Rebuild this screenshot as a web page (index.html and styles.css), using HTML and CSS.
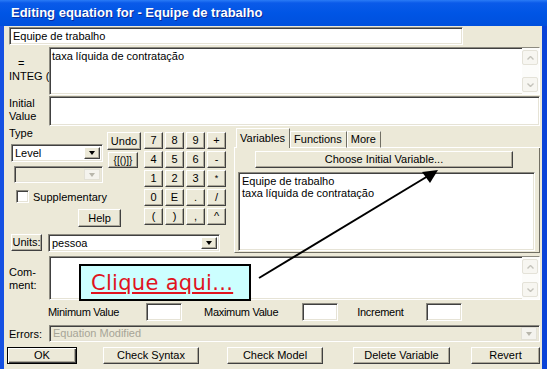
FILE: index.html
```html
<!doctype html>
<html lang="en">
<head>
    <meta charset="utf-8">
    <title>Editing equation for - Equipe de trabalho</title>
    <link rel="stylesheet" href="styles.css">
</head>
<body>
<div class="window">
    <div class="titlebar">Editing equation for - Equipe de trabalho</div>
    <div class="client">
        <div class="field name-field">Equipe de trabalho</div>

        <div class="row eq-row">
            <div class="side-label eq-label"><span class="eq-sign">=</span><span>INTEG (</span></div>
            <div class="field textbox">
                <div class="text">taxa líquida de contratação</div>
                <div class="vscroll">
                    <span class="sbtn"><svg width="7" height="4"><path d="M0.5 3.5 L3.5 0.5 L6.5 3.5" fill="none" stroke="#c4c3bb" stroke-width="1.4"/></svg></span>
                    <span class="sbtn"><svg width="7" height="4"><path d="M0.5 0.5 L3.5 3.5 L6.5 0.5" fill="none" stroke="#c4c3bb" stroke-width="1.4"/></svg></span>
                </div>
            </div>
        </div>

        <div class="row init-row">
            <div class="side-label">Initial<br>Value</div>
            <div class="field textbox"></div>
        </div>

        <div class="row middle">
            <div class="left-part">
                <div class="top-block">
                    <div class="type-col">
                        <div class="type-label">Type</div>
                        <div class="field select level-select">
                            <span class="value">Level</span>
                            <span class="arrow"><i class="tri"></i></span>
                        </div>
                        <div class="field select disabled sub-select">
                            <span class="value"></span>
                            <span class="arrow light"><i class="tri grey"></i></span>
                        </div>
                        <div class="check-row">
                            <span class="field checkbox"></span>
                            <span>Supplementary</span>
                        </div>
                        <div class="btn help-btn">Help</div>
                    </div>
                    <div class="ops-col">
                        <div class="btn undo-btn">Undo</div>
                        <div class="btn brackets-btn">{[()]}</div>
                    </div>
                    <div class="keypad">
                        <div class="btn">7</div><div class="btn">8</div><div class="btn">9</div><div class="btn">+</div>
                        <div class="btn">4</div><div class="btn">5</div><div class="btn">6</div><div class="btn">-</div>
                        <div class="btn">1</div><div class="btn">2</div><div class="btn">3</div><div class="btn small">*</div>
                        <div class="btn">0</div><div class="btn">E</div><div class="btn">.</div><div class="btn">/</div>
                        <div class="btn">(</div><div class="btn">)</div><div class="btn">,</div><div class="btn">^</div>
                    </div>
                </div>
                <div class="units-row">
                    <div class="btn units-btn">Units:</div>
                    <div class="field select units-select">
                        <span class="value">pessoa</span>
                        <span class="arrow"><i class="tri"></i></span>
                    </div>
                </div>
            </div>

            <div class="tabs-part">
                <div class="tab-strip">
                    <span class="tab-lead"></span>
                    <span class="tab active">Variables</span>
                    <span class="tab">Functions</span>
                    <span class="tab">More</span>
                    <span class="tab-fill"></span>
                </div>
                <div class="tab-panel">
                    <div class="btn choose-btn">Choose Initial Variable...</div>
                    <div class="field var-list">
                        <div>Equipe de trabalho</div>
                        <div>taxa líquida de contratação</div>
                    </div>
                </div>
            </div>
        </div>

        <div class="row comment-row">
            <div class="side-label">Com-<br>ment:</div>
            <div class="field textbox">
                <div class="text"></div>
                <div class="vscroll">
                    <span class="sbtn"><svg width="7" height="4"><path d="M0.5 3.5 L3.5 0.5 L6.5 3.5" fill="none" stroke="#c4c3bb" stroke-width="1.4"/></svg></span>
                    <span class="sbtn"><svg width="7" height="4"><path d="M0.5 0.5 L3.5 3.5 L6.5 0.5" fill="none" stroke="#c4c3bb" stroke-width="1.4"/></svg></span>
                </div>
            </div>
        </div>

        <div class="row range-row">
            <span class="range-label min-label">Minimum Value</span>
            <span class="field range-input min-input"></span>
            <span class="range-label max-label">Maximum Value</span>
            <span class="field range-input max-input"></span>
            <span class="range-label inc-label">Increment</span>
            <span class="field range-input inc-input"></span>
        </div>

        <div class="row errors-row">
            <div class="side-label errors-label">Errors:</div>
            <div class="field select disabled errors-select">
                <span class="value">Equation Modified</span>
                <span class="arrow light"><i class="tri grey"></i></span>
            </div>
        </div>

        <div class="row button-row">
            <div class="btn default ok-btn">OK</div>
            <div class="btn syntax-btn">Check Syntax</div>
            <div class="btn model-btn">Check Model</div>
            <div class="btn delete-btn">Delete Variable</div>
            <div class="btn revert-btn">Revert</div>
        </div>
    </div>

    <!-- tutorial callout drawn over the dialog -->
    <div class="callout">Clique aqui...</div>
    <svg class="pointer" width="549" height="369">
        <line x1="259" y1="278" x2="428" y2="176" stroke="#000" stroke-width="2"/>
        <polygon points="438,170 422,172 430,183" fill="#000"/>
    </svg>
</div>
</body>
</html>
```

FILE: styles.css
```css
* {
    box-sizing: border-box;
}
body {
    margin: 0;
    background: #fff;
    font-family: "Liberation Sans", Arial, sans-serif;
    font-size: 11px;
    color: #000;
}
.window {
    position: relative;
    width: 547px;
    height: 369px;
    background: #ece9d8;
}
.titlebar {
    height: 26px;
    padding: 5px 0 0 11px;
    color: #fff;
    font-size: 13px;
    font-weight: bold;
    line-height: 15px;
    text-shadow: 1px 1px #0a2a9a;
    background: linear-gradient(#2a7bf6 0, #0a5ae9 3px, #0055e5 50%, #0050dd 100%);
}
.client {
    height: 343px;
    border-left: 4px solid #1550e2;
    border-right: 5px solid #0a43d8;
    padding: 1px 2px 0 5px;
}
.row {
    display: flex;
}

/* sunken fields */
.field {
    background: #fff;
    border: 1px solid;
    border-color: #8c8a80 #fff #fff #8c8a80;
    box-shadow: inset 1px 1px #404040, inset -1px -1px #e6e3d6;
}
.name-field {
    width: 454px;
    height: 18px;
    padding: 2px 0 0 3px;
    line-height: 13px;
}
.side-label {
    width: 40px;
    line-height: 13px;
    white-space: nowrap;
}
.textbox {
    flex: 1;
    display: flex;
}
.textbox .text {
    flex: 1;
    padding: 2px 2px 0;
    line-height: 13px;
}
.vscroll {
    width: 17px;
    padding: 2px 1px 2px 0;
    display: flex;
    flex-direction: column;
    justify-content: space-between;
    background: #fcfcfa;
}
.sbtn {
    height: 15px;
    display: flex;
    align-items: center;
    justify-content: center;
    background: #f7f6f1;
    border: 1px solid #e4e2d8;
    border-radius: 2px;
}

.eq-row {
    margin-top: 2px;
    height: 48px;
}
.eq-label {
    display: flex;
    flex-direction: column;
    justify-content: center;
    padding-bottom: 2px;
}
.eq-sign {
    padding-left: 9px;
}
.init-row {
    margin-top: 1px;
    height: 30px;
}
.init-row .side-label {
    padding-top: 1px;
}

/* middle section */
.middle {
    margin-top: 1px;
    height: 126px;
}
.left-part {
    width: 225px;
}
.top-block {
    display: flex;
    height: 105px;
}
.type-col {
    width: 98px;
}
.type-label {
    height: 14px;
    line-height: 13px;
}
.select {
    display: flex;
    align-items: stretch;
    padding: 2px;
}
.select .value {
    flex: 1;
    padding-left: 1px;
    line-height: 13px;
}
.select .arrow {
    width: 16px;
    display: flex;
    align-items: center;
    justify-content: center;
    background: #ece9d8;
    border: 1px solid;
    border-color: #fff #404040 #404040 #fff;
    box-shadow: inset -1px -1px #aca899;
}
.select .arrow.light {
    background: #f4f3ee;
    border-color: #e2e0d6;
    box-shadow: none;
}
.select.disabled {
    background: #ece9d8;
    color: #a7a597;
}
.tri {
    width: 0;
    height: 0;
    border-left: 3.5px solid transparent;
    border-right: 3.5px solid transparent;
    border-top: 4px solid #000;
}
.tri.grey {
    border-top-color: #b8b6ac;
}
.level-select {
    margin: 3px 0 0 2px;
    width: 92px;
    height: 18px;
}
.sub-select {
    margin: 4px 0 0 5px;
    width: 89px;
    height: 17px;
}
.check-row {
    margin: 7px 0 0 7px;
    display: flex;
    align-items: center;
    gap: 4px;
    height: 13px;
}
.checkbox {
    width: 13px;
    height: 13px;
}

/* raised buttons */
.btn {
    display: flex;
    align-items: center;
    justify-content: center;
    background: #ece9d8;
    border: 1px solid;
    border-color: #fff #404040 #404040 #fff;
    box-shadow: inset -1px -1px #aca899;
    line-height: 13px;
}
.btn.default {
    border-color: #000;
    box-shadow: inset 1px 1px #fff, inset -1px -1px #404040, inset -2px -2px #aca899;
}
.help-btn {
    margin: 6px 0 0 69px;
    width: 43px;
    height: 18px;
}
.ops-col {
    width: 35px;
    padding-top: 5px;
}
.undo-btn {
    width: 34px;
    height: 18px;
}
.brackets-btn {
    margin: 2px 0 0 1px;
    width: 30px;
    height: 16px;
    font-size: 10px;
}
.keypad {
    margin: 5px 0 0 2px;
    display: grid;
    grid-template-columns: repeat(4, 19px);
    grid-auto-rows: 17px;
    column-gap: 2px;
    row-gap: 2px;
}
.keypad .small {
    font-size: 9px;
}
.units-row {
    margin-top: 2px;
    display: flex;
}
.units-btn {
    margin-left: 2px;
    width: 31px;
    height: 17px;
}
.units-select {
    margin-left: 6px;
    width: 172px;
    height: 18px;
}

/* tabs */
.tabs-part {
    width: 306px;
}
.tab-strip {
    display: flex;
    align-items: flex-end;
    height: 21px;
}
.tab-lead {
    width: 2px;
    border-bottom: 1px solid #fff;
}
.tab {
    height: 17px;
    padding: 1px 4px 0 3px;
    border: 1px solid;
    border-color: #fff #716f64 #fff #fff;
    line-height: 13px;
}
.tab.active {
    height: 20px;
    padding-top: 3px;
    border-bottom: 0;
}
.tab-fill {
    flex: 1;
    border-bottom: 1px solid #fff;
}
.tab-panel {
    height: 105px;
    border-left: 1px solid #fff;
    border-right: 1px solid #716f64;
    border-bottom: 1px solid #716f64;
    padding-top: 3px;
}
.choose-btn {
    margin-left: 20px;
    width: 258px;
    height: 17px;
}
.var-list {
    margin: 4px 0 0 3px;
    width: 297px;
    height: 79px;
    padding: 2px 3px;
    line-height: 12px;
}

/* lower rows */
.comment-row {
    margin-top: 3px;
    height: 44px;
}
.comment-row .side-label {
    padding-top: 10px;
}
.range-row {
    margin-top: 3px;
    height: 18px;
    align-items: center;
}
.range-label {
    letter-spacing: -0.3px;
}
.range-input {
    width: 36px;
    height: 18px;
}
.min-label {
    margin-left: 39px;
}
.min-input {
    margin-left: 27px;
}
.max-label {
    margin-left: 22px;
}
.max-input {
    margin-left: 24px;
}
.inc-label {
    margin-left: 19px;
}
.inc-input {
    margin-left: 23px;
}
.errors-row {
    margin-top: 4px;
    height: 17px;
}
.errors-label {
    padding-top: 3px;
}
.errors-select {
    flex: 1;
    padding: 1px 2px;
}
.button-row {
    margin: 5px 0 0 -2px;
    height: 17px;
}
.ok-btn {
    width: 70px;
}
.syntax-btn {
    margin-left: 26px;
    width: 96px;
}
.model-btn {
    margin-left: 28px;
    width: 96px;
}
.delete-btn {
    margin-left: 30px;
    width: 97px;
}
.revert-btn {
    margin-left: 21px;
    width: 69px;
}

/* overlay */
.callout {
    position: absolute;
    left: 79px;
    top: 264px;
    width: 172px;
    height: 37px;
    padding: 3px 0 0 10px;
    border: 2px solid #000;
    background: #ccffff;
    color: #e0141e;
    font-family: "DejaVu Sans", Verdana, sans-serif;
    font-size: 21px;
    letter-spacing: 0.3px;
    line-height: 28px;
    text-decoration: underline;
    white-space: nowrap;
}
.pointer {
    position: absolute;
    left: 0;
    top: 0;
    pointer-events: none;
}
```
